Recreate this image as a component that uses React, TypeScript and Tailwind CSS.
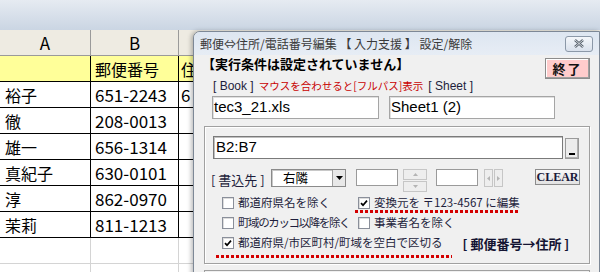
import React from "react";

const jp = "font-['Noto_Sans_CJK_JP',sans-serif]";

const rows = [
  ["裕子", "651-2243", "6"],
  ["徹", "208-0013", ""],
  ["雄一", "656-1314", ""],
  ["真紀子", "630-0101", ""],
  ["淳", "862-0970", ""],
  ["茉莉", "811-1213", ""],
];

function Check({ checked }: { checked?: boolean }) {
  return (
    <span className="flex h-[12px] w-[12px] shrink-0 items-center justify-center border border-[#8a8f9a] bg-white shadow-[inset_1px_1px_0_#dcdcdc]">
      {checked && (
        <svg width="8" height="8" viewBox="0 0 8 8">
          <path d="M1 4.2 L3 6.2 L7 1.6" stroke="#000" strokeWidth="1.7" fill="none" />
        </svg>
      )}
    </span>
  );
}

function Dots({ className }: { className: string }) {
  return (
    <span
      className={
        "absolute h-[3px] bg-[repeating-linear-gradient(90deg,#d40000_0px,#d40000_3px,transparent_3px,transparent_5px)] " +
        className
      }
    />
  );
}

function Sheet() {
  return (
    <div className={jp}>
      <div className="h-[30px] bg-linear-to-b from-[#e6ebf2] to-[#cad5e3]" />
      <div className="grid grid-cols-[91px_88px_1fr] text-black">
        {/* 列見出し */}
        <div className="flex h-[26px] items-center justify-center border-r border-b border-[#9a9a9a] bg-[#eeebe2] text-[17px]">A</div>
        <div className="flex h-[26px] items-center justify-center border-r border-b border-[#9a9a9a] bg-[#eeebe2] text-[17px]">B</div>
        <div className="h-[26px] border-b border-[#9a9a9a] bg-[#eeebe2]" />

        {/* 見出し行 */}
        <div className="h-[26px] border-r border-b border-black bg-[#ffff99]" />
        <div className="flex h-[26px] items-center border-r border-b border-black bg-[#ffff99] pl-[4px] text-[16px]">郵便番号</div>
        <div className="flex h-[26px] items-center border-b border-black bg-[#ffff99] pl-[2px] text-[16px]">住</div>

        {rows.map((r, i) => (
          <React.Fragment key={i}>
            <div className="flex h-[26px] items-center border-r border-b border-black pl-[5px] text-[16px]">{r[0]}</div>
            <div className="flex h-[26px] items-center border-r border-b border-black pl-[4px] text-[17px]">{r[1]}</div>
            <div className="flex h-[26px] items-center border-b border-black pl-[2px] text-[17px]">{r[2]}</div>
          </React.Fragment>
        ))}

        {[0, 1].map((i) => (
          <React.Fragment key={"e" + i}>
            <div className="h-[26px] border-r border-b border-[#d4d4d4]" />
            <div className="h-[26px] border-r border-b border-[#d4d4d4]" />
            <div className="h-[26px] border-b border-[#d4d4d4]" />
          </React.Fragment>
        ))}
      </div>
    </div>
  );
}

function Dialog() {
  return (
    <div
      className={
        "absolute left-[193px] top-[31px] h-[250px] w-[407px] overflow-hidden rounded-tl-[7px] border border-[#7d8896] bg-[#f0f0f0] shadow-[-2px_0_4px_rgba(0,0,0,0.25)] " +
        jp
      }
    >
      {/* タイトルバー */}
      <div className="flex h-[23px] items-center justify-between bg-linear-to-b from-[#dde6f1] to-[#e7edf5] pl-[6px] pr-[6px]">
        <span className="text-[12px] leading-none text-[#3a3a3a]">郵便⇔住所/電話番号編集 【 入力支援 】 設定/解除</span>
        <span className="flex h-[16px] w-[28px] items-center justify-center rounded-[3px] border border-[#8b98a8] bg-linear-to-b from-[#f4f7fb] to-[#d9e1ec]">
          <svg width="12" height="9" viewBox="0 0 12 9">
            <path d="M2 1 L10 8 M10 1 L2 8" stroke="#56606c" strokeWidth="2.4" />
            <path d="M2 1 L10 8 M10 1 L2 8" stroke="#f4f6f9" strokeWidth="0.8" />
          </svg>
        </span>
      </div>

      {/* 本体 */}
      <div className="flex items-start justify-between pl-[8px] pr-[9px] pt-[3px]">
        <span className="mt-[-2px] text-[13px] font-bold leading-[16px] text-black">【実行条件は設定されていません】</span>
        <span className="flex h-[21px] w-[45px] items-center justify-center border border-[#8c8c8c] bg-[#ffcccc] text-[13px] font-bold tracking-[2px] text-[#111] shadow-[inset_-1px_-1px_0_#a0a0a0,inset_1px_1px_0_#fff]">
          終了
        </span>
      </div>

      <div className="flex h-[14px] items-center pl-[19px] text-[12px] leading-none">
        <span className="font-['Liberation_Sans',sans-serif] text-[#1e1e3c]">[ Book ]</span>
        <span className="ml-[5px] whitespace-nowrap text-[10.5px] text-[#c80000]">マウスを合わせると[フルパス]表示</span>
        <span className="ml-[5px] font-['Liberation_Sans',sans-serif] text-[#1e1e3c]">[ Sheet ]</span>
      </div>

      <div className="mt-[3px] flex gap-[10px] pl-[18px] font-['Liberation_Sans',sans-serif] text-[15px]">
        <div className="flex h-[23px] w-[167px] items-center border border-[#a5a5a5] bg-white pl-[1px] shadow-[inset_1px_1px_0_#e0e0e0]">tec3_21.xls</div>
        <div className="flex h-[23px] w-[166px] items-center border border-[#a5a5a5] bg-white pl-[1px] shadow-[inset_1px_1px_0_#e0e0e0]">Sheet1 (2)</div>
      </div>

      {/* グループ枠 */}
      <div className="ml-[10px] mt-[7px] h-[138px] w-[386px] border border-[#a0a0a0] pl-[8px] pt-[9px] shadow-[inset_1px_1px_0_#fff,1px_1px_0_#fff]">
        <div className="flex items-start">
          <div className="flex h-[23px] w-[350px] items-center border border-[#7a7a7a] bg-white pl-[2px] font-['Liberation_Sans',sans-serif] text-[15px] shadow-[inset_1px_1px_0_#c0c0c0]">
            B2:B7
          </div>
          <div className="ml-[2px] mt-[2px] flex h-[21px] w-[14px] items-end justify-center border border-[#9a9a9a] bg-[#ececec] pb-[3px] shadow-[inset_-1px_-1px_0_#b0b0b0]">
            <span className="h-[2px] w-[6px] bg-black" />
          </div>
        </div>

        <div className="mt-[10px] flex items-start">
          <span className="ml-[-2px] mt-[3px] w-[57px] whitespace-nowrap text-[13px] leading-[16px] text-[#1e1e3c]">[ 書込先 ]</span>
          <div className="ml-[3px] flex h-[18px] w-[75px] items-center border border-[#8a8a8a] bg-white pl-[11px] text-[12.5px] leading-none shadow-[inset_1px_1px_0_#c8c8c8]">
            <span className="flex-1">右隣</span>
            <span className="flex h-[16px] w-[13px] items-center justify-center border-l border-[#a0a0a0] bg-[#e8e8e8]">
              <svg width="7" height="4" viewBox="0 0 7 4">
                <path d="M0 0 H7 L3.5 4 Z" fill="#000" />
              </svg>
            </span>
          </div>
          <div className="ml-[10px] h-[17px] w-[42px] border border-[#9a9a9a] bg-white" />
          <div className="ml-[5px] flex w-[24px] flex-col gap-[1px]">
            <span className="flex h-[11px] items-center justify-center border border-[#c6c6c6] bg-[#eeeeee]">
              <svg width="5" height="3" viewBox="0 0 5 3"><path d="M0 3 L2.5 0 L5 3 Z" fill="#b4b4b4" /></svg>
            </span>
            <span className="flex h-[11px] items-center justify-center border border-[#c6c6c6] bg-[#eeeeee]">
              <svg width="5" height="3" viewBox="0 0 5 3"><path d="M0 0 L2.5 3 L5 0 Z" fill="#b4b4b4" /></svg>
            </span>
          </div>
          <div className="ml-[9px] h-[17px] w-[42px] border border-[#9a9a9a] bg-white" />
          <div className="ml-[6px] flex h-[18px] w-[19px] gap-[1px]">
            <span className="flex flex-1 items-center justify-center border border-[#c6c6c6] bg-[#eeeeee]">
              <svg width="3" height="5" viewBox="0 0 3 5"><path d="M3 0 L0 2.5 L3 5 Z" fill="#b4b4b4" /></svg>
            </span>
            <span className="flex flex-1 items-center justify-center border border-[#c6c6c6] bg-[#eeeeee]">
              <svg width="3" height="5" viewBox="0 0 3 5"><path d="M0 0 L3 2.5 L0 5 Z" fill="#b4b4b4" /></svg>
            </span>
          </div>
          <div className="ml-[32px] flex h-[16px] w-[45px] items-center justify-center border border-[#8c8c8c] bg-linear-to-b from-[#f8f8f8] to-[#e2e2e2] font-['Liberation_Serif',serif] text-[12px] font-bold leading-none text-[#1a1a3a]">
            CLEAR
          </div>
        </div>

        <div className="ml-[9px] mt-[1px] grid grid-cols-[136px_1fr] whitespace-nowrap text-[11.5px] leading-none text-[#1e1e3c]">
          <label className="flex h-[20px] items-center gap-[4px]">
            <Check />
            <span>都道府県名を除く</span>
          </label>
          <label className="relative flex h-[20px] items-center gap-[4px]">
            <Check checked />
            <span>変換元を 〒123-4567 に編集</span>
            <Dots className="bottom-[0px] left-[-3px] w-[163px]" />
          </label>
          <label className="flex h-[20px] items-center gap-[4px]">
            <Check />
            <span className="tracking-[-1.4px]">町域のカッコ以降を除く</span>
          </label>
          <label className="flex h-[20px] items-center gap-[4px]">
            <Check />
            <span>事業者名を除く</span>
          </label>
        </div>
        <div className="ml-[9px] flex h-[20px] items-center whitespace-nowrap text-[11.5px] leading-none text-[#1e1e3c]">
          <label className="relative flex items-center gap-[4px]">
            <Check checked />
            <span>都道府県/市区町村/町域を空白で区切る</span>
            <Dots className="bottom-[-9px] left-[-6px] w-[236px]" />
          </label>
          <span className="ml-[20px] text-[13px] font-bold text-[#141432]">[ 郵便番号→住所 ]</span>
        </div>
      </div>

      <div className="ml-[10px] mt-[6px] h-[20px] w-[386px] border border-[#a0a0a0]" />
    </div>
  );
}

export default function App() {
  return (
    <div className="relative h-[272px] w-[600px] overflow-hidden bg-white">
      <Sheet />
      <Dialog />
    </div>
  );
}
